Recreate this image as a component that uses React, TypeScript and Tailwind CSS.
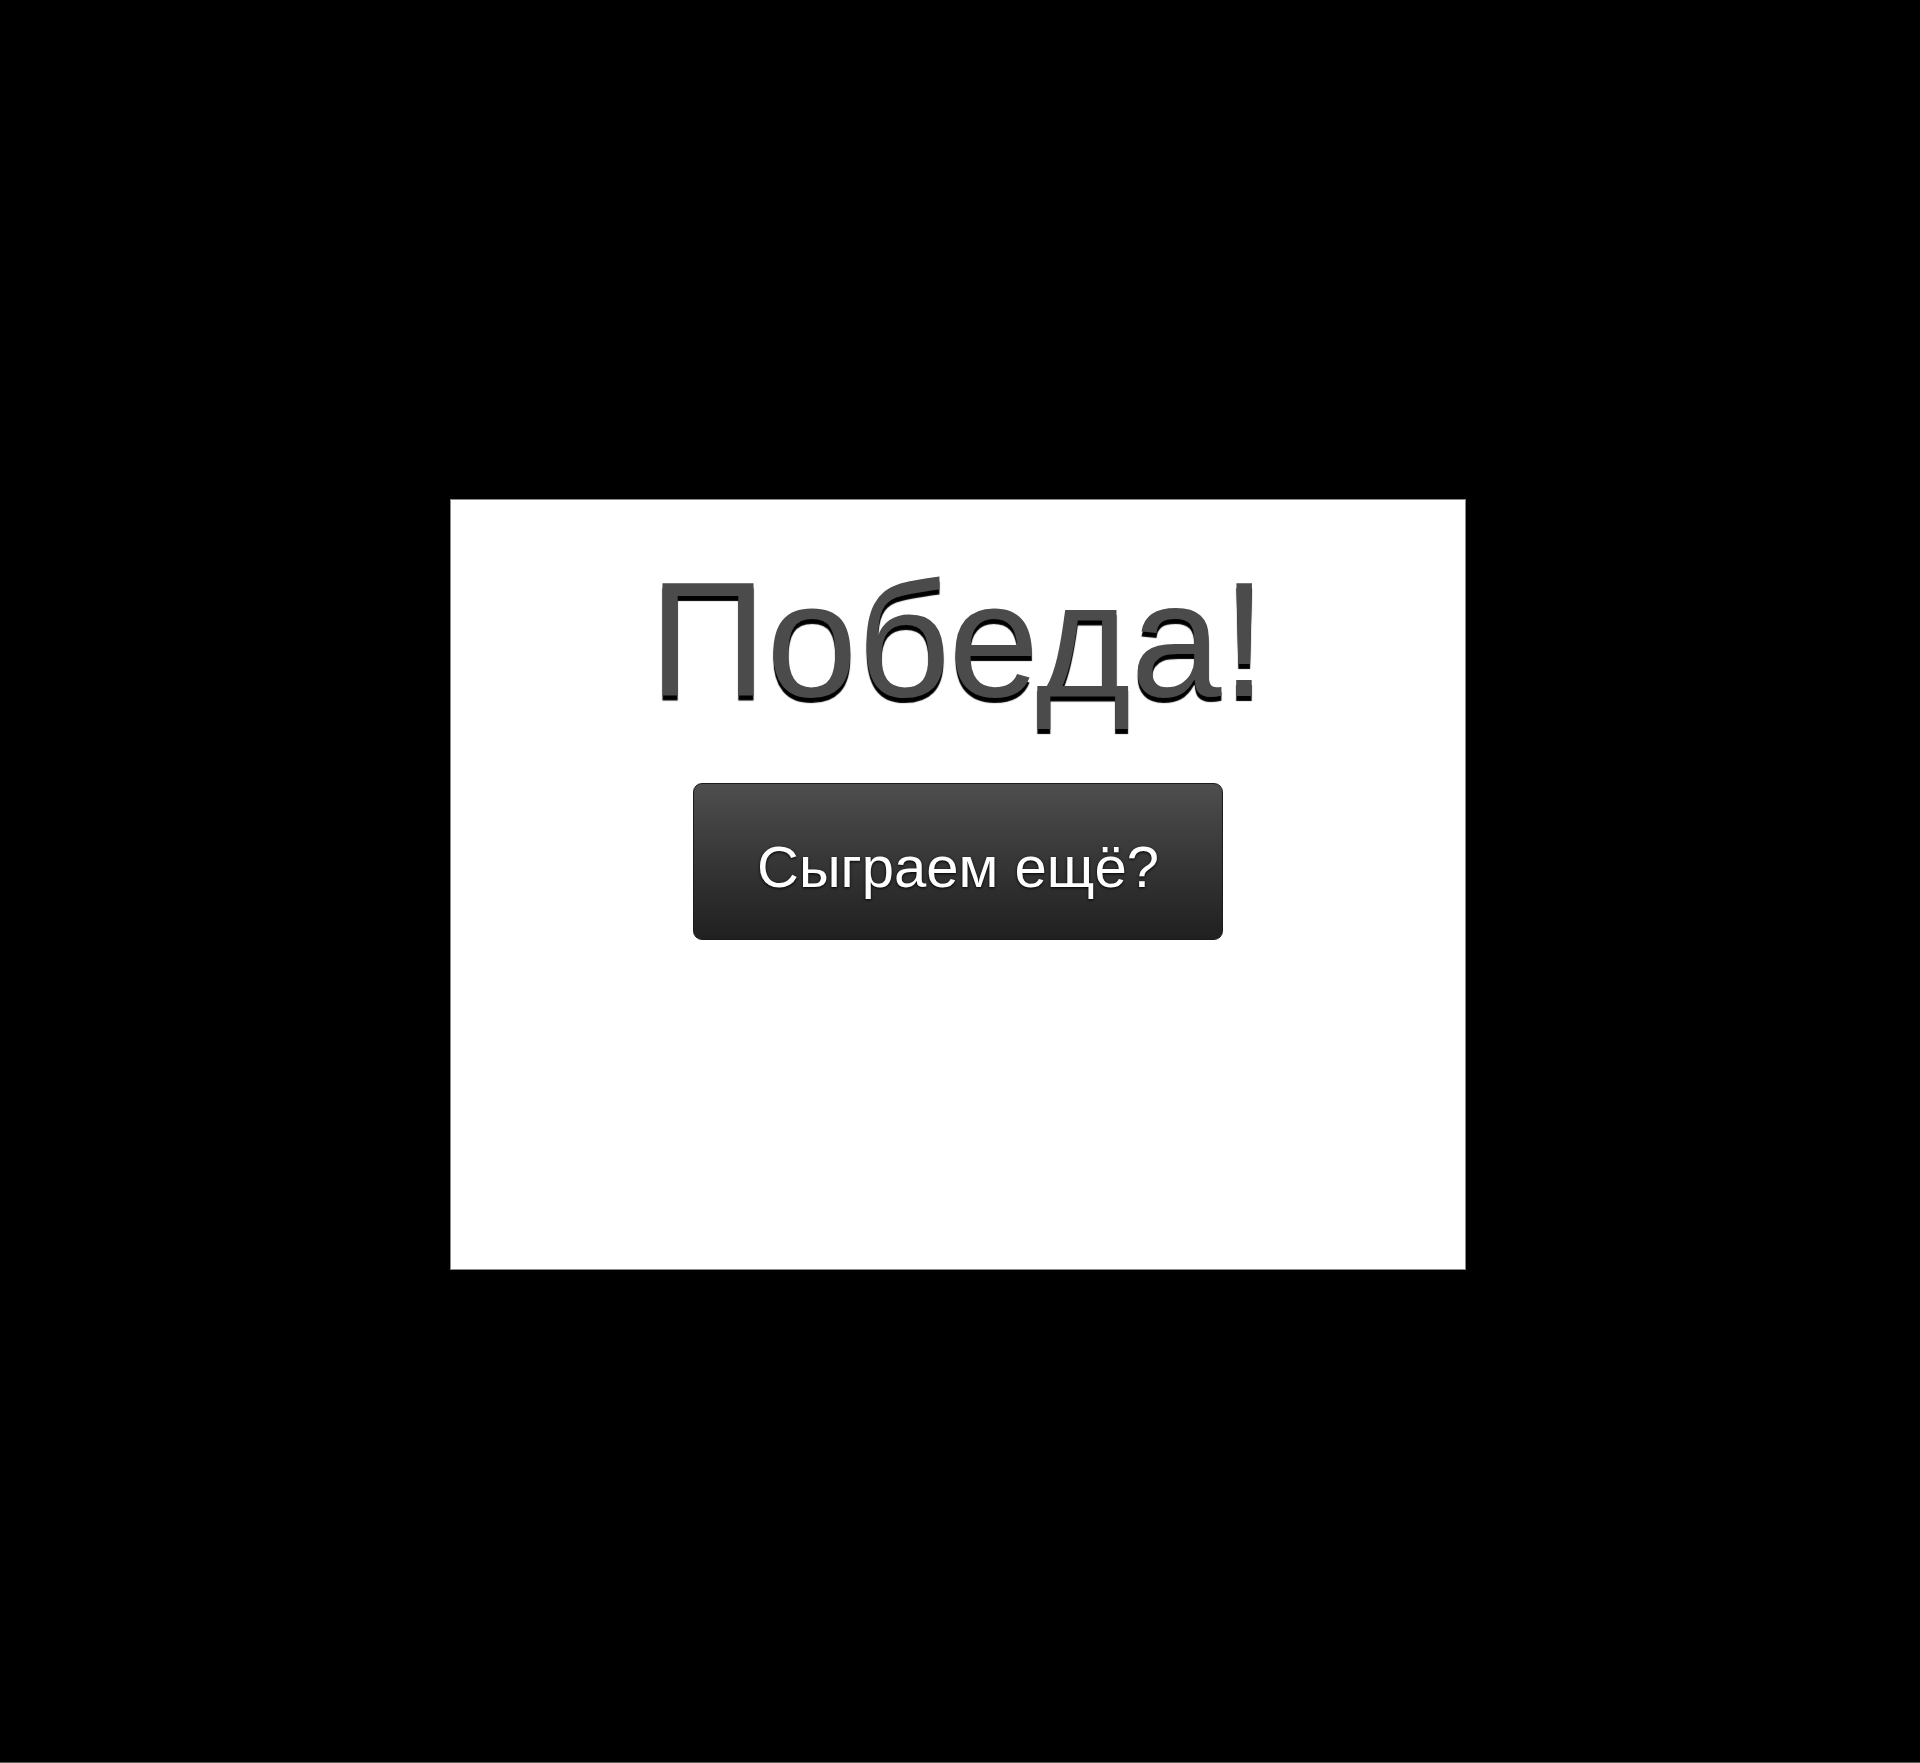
import React from "react";

export default function App() {
  return (
    <div className="box-border flex h-[1763px] w-full flex-col items-center border-b border-[#5a5a5a] bg-black pt-[499px] font-['Liberation_Sans',Arial,sans-serif]">
      <div className="-ml-[4px] box-border flex h-[771px] w-[1016px] flex-col items-center border border-[#8a8a8a] bg-white">
        <h1 className="mt-[60px] text-[163px] leading-[160px] font-normal text-[#4b4b4b] [text-shadow:0_5px_1px_#000]">
          Победа!
        </h1>
        <button
          type="button"
          className="mt-[63px] box-border flex h-[157px] w-[530px] items-center justify-center rounded-[9px] border border-[#1c1c1c] bg-gradient-to-b from-[#4e4e4e] to-[#202020] pt-[10px] text-[58px] text-white [text-shadow:0_1px_3px_#000]"
        >
          Сыграем ещё?
        </button>
      </div>
    </div>
  );
}
